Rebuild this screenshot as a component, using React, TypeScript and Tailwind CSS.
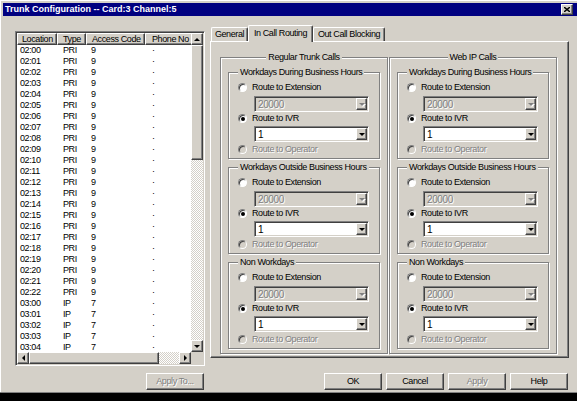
const raised =
  "border border-t-white border-l-white border-r-[#404040] border-b-[#404040] shadow-[inset_-1px_-1px_0_#808080] bg-[#d4d0c8]";
const sunken =
  "border border-t-[#808080] border-l-[#808080] border-r-white border-b-white shadow-[inset_1px_1px_0_#404040,inset_-1px_-1px_0_#d4d0c8]";
const etched = "border border-[#808080] shadow-[inset_1px_1px_0_#fff,1px_1px_0_#fff]";
const dimText = "text-[#808080] [text-shadow:1px_1px_0_#fff]";
const dither =
  "bg-[repeating-conic-gradient(#d4d0c8_0_25%,#ffffff_0_50%)] bg-[length:2px_2px]";

type Row = { loc: string; type: string; code: string };

const pad = (n: number) => (n < 10 ? `0${n}` : `${n}`);

const rows: Row[] = [
  ...Array.from({ length: 23 }, (_, i) => ({ loc: `02:${pad(i)}`, type: "PRI", code: "9" })),
  ...Array.from({ length: 8 }, (_, i) => ({ loc: `03:${pad(i)}`, type: "IP", code: "7" })),
];

const columns = [
  { label: "Location", width: "w-[40px]", pad: "pl-[4px]" },
  { label: "Type", width: "w-[29px]", pad: "pl-[5px]" },
  { label: "Access Code", width: "w-[59px]", pad: "pl-[5px]" },
  { label: "Phone No", width: "w-[60px]", pad: "pl-[6px]" },
];

function Arrow({ dir, disabled }: { dir: "up" | "down" | "left" | "right"; disabled?: boolean }) {
  const fill = disabled ? "#808080" : "#000";
  if (dir === "up" || dir === "down") {
    const pts = dir === "down" ? "0,0 6,0 3,3" : "0,3 6,3 3,0";
    return (
      <svg width="6" height="3" viewBox="0 0 6 3" className="block overflow-visible">
        {disabled && <polygon points={pts} fill="#fff" transform="translate(1,1)" />}
        <polygon points={pts} fill={fill} />
      </svg>
    );
  }
  const pts = dir === "right" ? "0,0 3,3 0,6" : "3,0 0,3 3,6";
  return (
    <svg width="3" height="6" viewBox="0 0 3 6" className="block">
      <polygon points={pts} fill={fill} />
    </svg>
  );
}

function ScrollButton({ dir }: { dir: "up" | "down" | "left" | "right" }) {
  return (
    <div className={`${raised} w-[12px] h-[12px] shrink-0 flex items-center justify-center`}>
      <Arrow dir={dir} />
    </div>
  );
}

function Radio({ checked, disabled }: { checked?: boolean; disabled?: boolean }) {
  return (
    <span
      className={`w-[9px] h-[9px] shrink-0 rounded-full border border-t-[#808080] border-l-[#808080] border-r-white border-b-white shadow-[inset_1px_1px_0_#404040] flex items-center justify-center ${
        disabled ? "bg-[#d4d0c8]" : "bg-white"
      }`}
    >
      {checked && <span className="w-[4px] h-[4px] rounded-full bg-black" />}
    </span>
  );
}

function RadioRow({ label, checked, disabled, className }: { label: string; checked?: boolean; disabled?: boolean; className: string }) {
  return (
    <div className={`flex items-center h-[11px] pl-[9px] gap-[5px] ${className}`}>
      <Radio checked={checked} disabled={disabled} />
      <span className={`whitespace-nowrap ${disabled ? dimText : "text-black"}`}>{label}</span>
    </div>
  );
}

function Combo({ value, disabled, className }: { value: string; disabled?: boolean; className: string }) {
  return (
    <div
      className={`${sunken} ml-[25px] w-[115px] h-[16px] p-[1px] flex items-center ${
        disabled ? "bg-[#d4d0c8]" : "bg-white"
      } ${className}`}
    >
      <span className={`flex-1 pl-[2px] text-[10px] ${disabled ? dimText : "text-black"}`}>{value}</span>
      <span className={`${raised} w-[11px] h-[12px] flex items-center justify-center`}>
        <Arrow dir="down" disabled={disabled} />
      </span>
    </div>
  );
}

function RoutingBox({ title }: { title: string }) {
  return (
    <div className={`${etched} w-[152px] h-[87px] flex flex-col`}>
      <div className="-mt-[6px] ml-[9px] self-start h-[11px] px-[2px] bg-[#d4d0c8] text-black whitespace-nowrap">{title}</div>
      <RadioRow label="Route to Extension" className="mt-[4px]" />
      <Combo value="20000" disabled className="mt-[3px]" />
      <RadioRow label="Route to IVR" checked className="mt-[1px]" />
      <Combo value="1" className="mt-[2px]" />
      <RadioRow label="Route to Operator" disabled className="mt-[2px]" />
    </div>
  );
}

function CallGroup({ title }: { title: string }) {
  return (
    <div className={`${etched} w-[168px] h-[297px] flex flex-col`}>
      <div className="-mt-[6px] mx-auto h-[11px] px-[2px] bg-[#d4d0c8] text-black whitespace-nowrap">{title}</div>
      <div className="flex flex-col gap-[8px] pl-[7px] mt-[9px]">
        <RoutingBox title="Workdays During Business Hours" />
        <RoutingBox title="Workdays Outside Business Hours" />
        <RoutingBox title="Non Workdays" />
      </div>
    </div>
  );
}

function Button({ label, disabled, className = "" }: { label: string; disabled?: boolean; className?: string }) {
  return (
    <button
      type="button"
      className={`${raised} w-[58px] h-[17px] flex items-center justify-center leading-[11px] whitespace-nowrap ${
        disabled ? dimText : "text-black"
      } ${className}`}
    >
      {label}
    </button>
  );
}

function Tab({ label, selected, width }: { label: string; selected?: boolean; width: string }) {
  return (
    <div
      className={`${width} flex items-center justify-center whitespace-nowrap rounded-t-[2px] border-t border-l border-r border-t-white border-l-white border-r-[#404040] shadow-[inset_-1px_0_0_#808080] bg-[#d4d0c8] text-black ${
        selected ? "relative z-10 h-[17px] -mb-[1px] pb-[2px]" : "h-[14px]"
      }`}
    >
      {label}
    </div>
  );
}

function TrunkList() {
  return (
    <div className={`${sunken} w-[190px] h-[335px] bg-white flex flex-col p-[1px]`}>
      <div className="flex h-[319px]">
        <div className="w-[174px] overflow-hidden flex flex-col">
          <div className="flex shrink-0">
            {columns.map((c) => (
              <div key={c.label} className={`${raised} ${c.width} ${c.pad} shrink-0 h-[12px] leading-[10px] whitespace-nowrap text-black`}>
                {c.label}
              </div>
            ))}
          </div>
          {rows.map((r) => (
            <div key={r.loc} className="flex shrink-0 h-[11px] leading-[11px] whitespace-nowrap text-black">
              <span className="w-[40px] shrink-0 pl-[3px]">{r.loc}</span>
              <span className="w-[29px] shrink-0 pl-[6px]">{r.type}</span>
              <span className="w-[59px] shrink-0 pl-[5px]">{r.code}</span>
              <span className="w-[60px] shrink-0 pl-[7px]">·</span>
            </div>
          ))}
        </div>
        <div className="w-[12px] flex flex-col">
          <ScrollButton dir="up" />
          <div className={`${raised} h-[115px] shrink-0`} />
          <div className={`flex-1 ${dither}`} />
          <ScrollButton dir="down" />
        </div>
      </div>
      <div className="flex h-[12px]">
        <div className="w-[174px] flex">
          <ScrollButton dir="left" />
          <div className={`${raised} w-[130px] shrink-0`} />
          <div className={`flex-1 ${dither}`} />
          <ScrollButton dir="right" />
        </div>
        <div className="w-[12px] bg-[#d4d0c8]" />
      </div>
    </div>
  );
}

export default function App() {
  return (
    <div className="w-[577px] h-[401px] bg-[#d4d0c8] flex flex-col overflow-hidden font-['Liberation_Sans',Arial,sans-serif] text-[9px] leading-[11px] tracking-[-0.4px] select-none">
      <div className="flex-1 flex flex-col border-t border-l border-white pt-[2px] pl-[2px]">
        <div className="h-[13px] bg-[#000080] flex items-center justify-between pl-[2px]">
          <span className="text-white font-bold text-[9px] leading-[13px] tracking-normal whitespace-nowrap">
            Trunk Configuration -- Card:3 Channel:5
          </span>
          <span className={`${raised} w-[12px] h-[11px] mr-[4px] flex items-center justify-center`}>
            <svg width="6" height="5" viewBox="0 0 6 5" className="block">
              <path d="M0 0L6 5M6 0L0 5" stroke="#000" strokeWidth="1.4" />
            </svg>
          </span>
        </div>

        <div className="flex items-start pl-[12px] gap-[5px]">
          <div className="w-[190px] pt-[15px] flex flex-col">
            <TrunkList />
            <Button label="Apply To..." disabled className="mt-[7px] self-end mr-[1px] w-[57px]" />
          </div>

          <div className="w-[359px] pt-[9px] flex flex-col">
            <div className="flex items-end h-[16px] pl-[1px]">
              <Tab label="General" width="w-[37px]" />
              <Tab label="In Call Routing" width="w-[65px]" selected />
              <Tab label="Out Call Blocking" width="w-[72px]" />
            </div>
            <div className="border border-t-white border-l-white border-r-[#404040] border-b-[#404040] shadow-[inset_-1px_-1px_0_#808080] h-[317px] pl-[9px] pt-[15px] flex gap-[1px]">
              <CallGroup title="Regular Trunk Calls" />
              <CallGroup title="Web IP Calls" />
            </div>
            <div className="flex justify-end gap-[4px] mt-[15px] mr-[1px]">
              <Button label="OK" />
              <Button label="Cancel" />
              <Button label="Apply" disabled />
              <Button label="Help" />
            </div>
          </div>
        </div>
      </div>
      <div className="h-[9px] shrink-0 bg-black border-t border-[#808080]" />
    </div>
  );
}
